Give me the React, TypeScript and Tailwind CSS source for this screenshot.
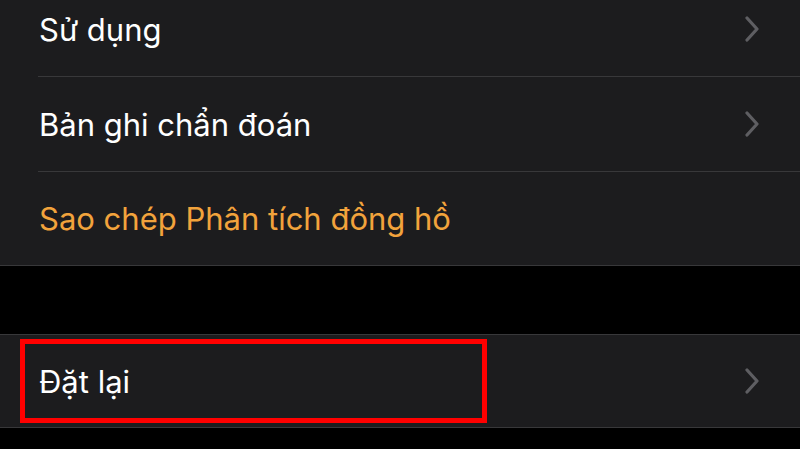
import React from "react";

function Chevron(): React.JSX.Element {
  return (
    <svg width="16" height="26" viewBox="0 0 16 26" fill="none" className="shrink-0">
      <path
        d="M3 2 L13 13 L3 24"
        stroke="#5e5e62"
        strokeWidth="3.2"
        strokeLinecap="round"
        strokeLinejoin="round"
      />
    </svg>
  );
}

type RowProps = {
  label: string;
  orange?: boolean;
  chevron?: boolean;
  className?: string;
};

function Row(props: RowProps): React.JSX.Element {
  return (
    <div
      className={`w-full flex items-center justify-between pl-[39px] pr-[40px] bg-[#1c1c1e] ${props.className ?? ""}`}
    >
      <p
        className={`font-['Inter','Noto_Sans',sans-serif] text-[31px] leading-none ${
          props.orange ? "text-[#f2a33c]" : "text-white"
        }`}
      >
        {props.label}
      </p>
      {props.chevron && <Chevron />}
    </div>
  );
}

export default function App(): React.JSX.Element {
  return (
    <div className="w-[800px] h-[449px] overflow-hidden bg-black flex flex-col">
      <div className="h-px w-full bg-[#2a2a2c] shrink-0" />
      <div className="bg-[#1c1c1e] flex flex-col shrink-0 mt-[-19px]">
        <Row label="Sử dụng" chevron className="h-[94px]" />
        <div className="ml-[38px] h-px bg-[#38383a]" />
        <Row label="Bản ghi chẩn đoán" chevron className="h-[94px]" />
        <div className="ml-[38px] h-px bg-[#38383a]" />
        <Row label="Sao chép Phân tích đồng hồ" orange className="h-[93px]" />
      </div>
      <div className="h-px w-full bg-[#38383a] shrink-0" />
      <div className="h-[68px] shrink-0" />
      <div className="h-px w-full bg-[#38383a] shrink-0" />
      <div className="relative shrink-0">
        <Row label="Đặt lại" chevron className="h-[92px]" />
        <div className="absolute left-[20px] top-[4px] w-[467px] h-[84px] border-[5px] border-[#ff0000]" />
      </div>
      <div className="h-px w-full bg-[#38383a] shrink-0" />
    </div>
  );
}
